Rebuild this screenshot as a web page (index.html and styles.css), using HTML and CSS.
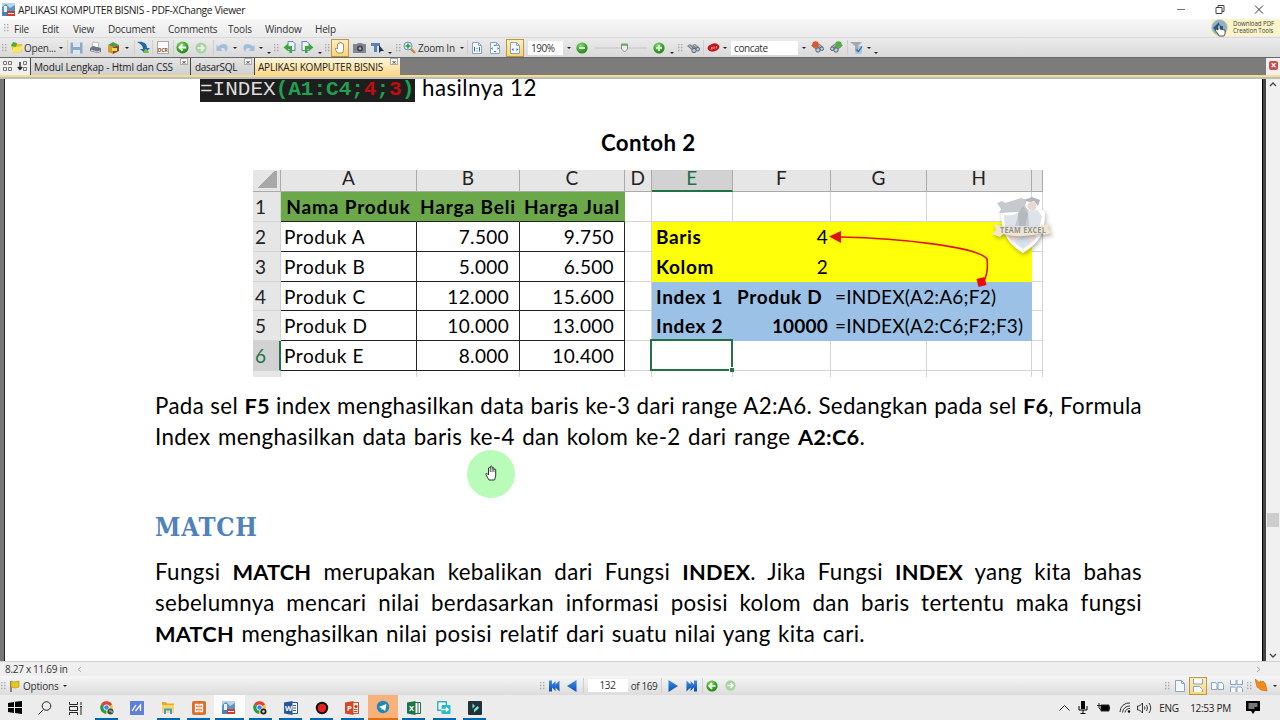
FILE: index.html
```
<!DOCTYPE html>
<html lang="id">

<head>
    <meta charset="UTF-8">
    <meta name="viewport" content="width=device-width, initial-scale=1.0">
    <title>APLIKASI KOMPUTER BISNIS - PDF-XChange Viewer</title>
    <link rel="stylesheet" href="styles.css">
</head>

<body>
    <!-- shared icons -->
    <svg class="defs" width="0" height="0">
        <defs>
            <radialGradient id="ball" cx=".4" cy=".3" r=".8">
                <stop offset="0" stop-color="#8be06a" />
                <stop offset=".55" stop-color="#3aa32a" />
                <stop offset="1" stop-color="#1e7a17" />
            </radialGradient>
            <linearGradient id="blue" x1="0" y1="0" x2="0" y2="1">
                <stop offset="0" stop-color="#3d8fe8" />
                <stop offset="1" stop-color="#0a4db0" />
            </linearGradient>
        </defs>
        <symbol id="grip" viewBox="0 0 5 9">
            <path d="M0 .5h1.4M3 .5h1.4M0 3.5h1.4M3 3.5h1.4M0 6.5h1.4M3 6.5h1.4" stroke="#a9a9a9" stroke-width="1.3" />
        </symbol>
        <symbol id="app" viewBox="0 0 14 14">
            <rect width="13" height="13" fill="#b9d3e8" />
            <path d="M0 4l4-3 4 4 5-3v7H0z" fill="#5f93c4" />
            <path d="M2 3h3v6H2z" fill="#e8f2fa" />
            <rect x="5" y="8" width="8" height="5" fill="#d43a2f" />
            <path d="M0 9h5v4H0z" fill="#4585bd" />
            <path d="M6 10.500h6" stroke="#fff" stroke-width="1" />
        </symbol>
        <symbol id="back" viewBox="0 0 12 12">
            <circle cx="6" cy="6" r="5.6" fill="url(#ball)" />
            <path d="M9.500 6H3.500M6 3.200L3.200 6 6 8.800" fill="none" stroke="#fff" stroke-width="1.7" />
        </symbol>
        <symbol id="fwd" viewBox="0 0 12 12">
            <circle cx="6" cy="6" r="5.6" fill="#a9d3a4" />
            <path d="M2.500 6h6M6 3.200L8.800 6 6 8.800" fill="none" stroke="#eef6ec" stroke-width="1.7" />
        </symbol>
        <symbol id="undo" viewBox="0 0 12 12">
            <path d="M0 3v6h6L4 7c2-2 5-1 5 3 4-4 2-8-2-8-2 0-4 1-5 2.500z" fill="#a3bedb" />
        </symbol>
        <symbol id="page" viewBox="0 0 12 12">
            <path d="M1.500.5h6l3 3v8h-9z" fill="#f6faff" stroke="#8ba3c0" />
            <path d="M7.500.5v3h3" fill="none" stroke="#8ba3c0" />
        </symbol>
        <symbol id="chrome" viewBox="0 0 14 14">
            <circle cx="6.500" cy="6.500" r="6.300" fill="#fbc02d" />
            <path d="M6.500 6.500L1 3.500A6.300 6.300 0 0 1 12 3.500z" fill="#db4437" />
            <path d="M6.500 6.500L1 3.500A6.300 6.300 0 0 0 6 12.800z" fill="#1e9e58" />
            <circle cx="6.500" cy="6.500" r="3" fill="#fff" />
            <circle cx="6.500" cy="6.500" r="2.300" fill="#4285f4" />
        </symbol>
        <symbol id="binoc" viewBox="0 0 13 12">
            <path d="M0 4l3-2 5 4-2 3zM5 3l3-1 4 3-2 3z" fill="#7c848e" />
            <path d="M2 3.500l4 3.500M7 3l3 2.500" stroke="#c3c9d0" />
            <circle cx="7" cy="8.500" r="2.200" fill="#b9d0e2" stroke="#59616b" />
            <circle cx="10.800" cy="7.200" r="1.800" fill="#b9d0e2" stroke="#59616b" />
        </symbol>
    </svg>

    <header class="titlebar">
        <svg width="14" height="14"><use href="#app" /></svg>
        <span class="title">APLIKASI KOMPUTER BISNIS - PDF-XChange Viewer</span>
        <svg class="winbtns" width="90" height="10" viewBox="0 0 90 10">
            <path d="M0 4.500h8" stroke="#777" />
            <path d="M39 2.500h6v6h-6zM41 2.500v-2h6v6h-2" fill="none" stroke="#444" />
            <path d="M78 .5l8 8M86 .5l-8 8" stroke="#333" />
        </svg>
    </header>

    <nav class="menubar">
        <svg class="grip" width="5" height="9"><use href="#grip" /></svg>
        <span>File</span><span>Edit</span><span>View</span><span>Document</span><span>Comments</span><span>Tools</span><span>Window</span><span>Help</span>
        <div class="promo">
            <svg width="18" height="18" viewBox="0 0 18 18">
                <circle cx="8.500" cy="8.500" r="8" fill="#8fb1ca" stroke="#e2d9a8" />
                <path d="M2 9l6-6v4h4v4H8v4z" fill="#285d8c" />
                <path d="M7 15l-3-4 1-1 2 1V6h2v4l5 1v4l-1 2H8z" fill="#fff" stroke="#333" stroke-width=".8" />
            </svg>
            <div>Download PDF<br>Creation Tools</div>
        </div>
    </nav>

    <div class="toolbar">
        <svg class="grip" width="5" height="9"><use href="#grip" /></svg>
        <svg width="13" height="13" viewBox="0 0 13 13">
            <path d="M1 3l4-1 2 1h5v8l-9 1z" fill="#e9c229" />
            <path d="M1 12l3-6 9-1-2 6z" fill="#f9e56a" />
            <path d="M1 5l2-4 4 1-1 4z" fill="#4fae3a" />
        </svg>
        <span class="left">Open...</span>
        <i class="caret"></i>
        <i class="sep"></i>
        <svg width="13" height="12" viewBox="0 0 13 12">
            <path d="M.5.500h12v11H.5z" fill="#8fa9c8" />
            <path d="M3 0h7v5H3zM3 8h7v4H3z" fill="#dce6f1" />
        </svg>
        <svg width="13" height="13" viewBox="0 0 13 13">
            <path d="M4 1l6 1-1 5-6-1z" fill="#fff" stroke="#9aa5b5" stroke-width=".7" />
            <path d="M1 7l3-2 8 2v4l-4 1-7-2z" fill="#6d7683" />
            <path d="M2 9l6 2 3-1" stroke="#d9dee5" fill="none" />
        </svg>
        <svg width="13" height="13" viewBox="0 0 13 13">
            <path d="M1 4l5 2v7l-5-2z" fill="#d79a25" />
            <path d="M6 6l6-2v6l-6 3z" fill="#8a4d23" />
            <path d="M1 4l5-3 6 3-6 2z" fill="#4f9b46" />
            <path d="M5 7h5v3H5z" fill="#f3d35c" />
        </svg>
        <i class="caret"></i>
        <i class="sep"></i>
        <svg width="13" height="13" viewBox="0 0 13 13">
            <path d="M0 1c6-1 10 1 10 6h3l-5 5-5-4h3C6 5 4 3 0 1z" fill="#1e67ad" />
            <path d="M8 8c2 0 4 2 4 4H6z" fill="#79b94c" />
        </svg>
        <i class="sep"></i>
        <span class="ocr">OCR</span>
        <i class="sep"></i>
        <svg width="13" height="13"><use href="#back" /></svg>
        <svg width="12" height="12"><use href="#fwd" /></svg>
        <i class="sep"></i>
        <svg width="13" height="12"><use href="#undo" /></svg>
        <i class="caret"></i>
        <svg class="flip" width="13" height="12"><use href="#undo" /></svg>
        <i class="caret"></i>
        <i class="caret low"></i>
        <svg class="grip" width="5" height="9"><use href="#grip" /></svg>
        <svg width="13" height="13" viewBox="0 0 13 13">
            <path d="M5 .500h5l2 2v7H5z" fill="#eaf4ff" stroke="#5e86ae" />
            <path d="M9 12V5H5V2.500L.5 6.500 5 10V8h1.500v4z" fill="#3aa836" />
        </svg>
        <svg width="13" height="13" viewBox="0 0 13 13">
            <path d="M1 .500h5l2 2v7H1z" fill="#eaf4ff" stroke="#5e86ae" />
            <path d="M4 12V5h4V2.500l4.500 4L8 10V8H6.500v4z" fill="#3aa836" />
        </svg>
        <i class="caret low"></i>
        <svg class="grip" width="5" height="9"><use href="#grip" /></svg>
        <span class="pressed">
            <svg width="12" height="13" viewBox="0 0 12 13">
                <path d="M3.500 12L1 8l1-1 1.500 1V3q.8-1 1.500 0V1.500q.8-1 1.500 0V2q.8-1 1.500 0v1q.8-.8 1.500 0V9l-1 3z" fill="#fff" stroke="#8b7a5a" stroke-width=".8" />
            </svg>
        </span>
        <svg width="13" height="12" viewBox="0 0 13 12">
            <path d="M0 2h4l1-1h4l1 1h3v9H0z" fill="#83878d" />
            <circle cx="7" cy="6.500" r="3" fill="#3b4450" />
            <circle cx="7" cy="6.500" r="1.300" fill="#a9bdd0" />
        </svg>
        <svg width="13" height="12" viewBox="0 0 13 12">
            <path d="M0 1h9v3H6v6H3V4H0z" fill="#5b82b5" />
            <path d="M8 3v8l2-2h3z" fill="#23364f" />
        </svg>
        <i class="caret low"></i>
        <svg class="grip" width="5" height="9"><use href="#grip" /></svg>
        <svg width="13" height="13" viewBox="0 0 13 13">
            <path d="M7 7l5 5" stroke="#c8873c" stroke-width="2.400" />
            <circle cx="5" cy="5" r="4" fill="#d5ecfa" stroke="#6b93b3" />
            <path d="M5 2.500v5M2.500 5h5" stroke="#2b9c2b" stroke-width="1.500" />
        </svg>
        <span class="left zoomtxt">Zoom In</span>
        <i class="caret"></i>
        <i class="sep"></i>
        <svg width="12" height="12" viewBox="0 0 12 12"><use href="#page" />
            <path d="M3.500 5v4.500M8.500 5v4.500M6 6v1M6 8.500v1" stroke="#3273b8" />
        </svg>
        <svg width="12" height="12" viewBox="0 0 12 12"><use href="#page" />
            <path d="M6 2.500L7.500 4h-3zM6 10.500L7.500 9h-3zM2 6.500L3.500 5v3zM10 6.500L8.500 5v3z" fill="#3273b8" />
        </svg>
        <span class="pressed">
            <svg width="12" height="12" viewBox="0 0 12 12"><use href="#page" />
                <path d="M2.500 7.500L4.500 6v3zM9.500 7.500L7.500 6v3z" fill="#3273b8" />
            </svg>
        </span>
        <span class="field pct">190%</span>
        <i class="caret"></i>
        <svg width="12" height="12" viewBox="0 0 12 12">
            <circle cx="6" cy="6" r="5.600" fill="url(#ball)" />
            <path d="M3 6h6" stroke="#fff" stroke-width="1.600" />
        </svg>
        <svg width="52" height="10" viewBox="0 0 52 10">
            <path d="M0 5h52" stroke="#c3c3c3" />
            <path d="M26.500 1h6v5l-3 3-3-3z" fill="#eee" stroke="#8a8a8a" />
            <path d="M27 2h5" stroke="#4caf50" stroke-width="1.500" />
        </svg>
        <svg width="12" height="12" viewBox="0 0 12 12">
            <circle cx="6" cy="6" r="5.600" fill="url(#ball)" />
            <path d="M3 6h6M6 3v6" stroke="#fff" stroke-width="1.600" />
        </svg>
        <i class="caret low"></i>
        <svg class="grip" width="5" height="9"><use href="#grip" /></svg>
        <svg width="13" height="12"><use href="#binoc" /></svg>
        <i class="sep"></i>
        <svg width="13" height="11" viewBox="0 0 13 11">
            <ellipse cx="6.500" cy="5.500" rx="6" ry="4" transform="rotate(-15 6.500 5.500)" fill="#c4161c" />
            <path d="M4 7.500l1-2.500v2.500M7 7V4.500M9 6.500l.7-2.500" stroke="#f3c4c4" stroke-width=".8" fill="none" />
        </svg>
        <i class="caret"></i>
        <span class="field search">concate</span>
        <i class="caret"></i>
        <svg width="13" height="13" viewBox="0 0 13 13"><use href="#binoc" />
            <circle cx="4.500" cy="3.500" r="3.200" fill="#e0562a" />
        </svg>
        <svg class="flip" width="13" height="13" viewBox="0 0 13 13"><use href="#binoc" />
            <circle cx="4.500" cy="3.500" r="3.200" fill="#50b03c" />
        </svg>
        <i class="sep"></i>
        <svg width="14" height="12" viewBox="0 0 14 12">
            <path d="M6 4h6v8H5z" fill="#a9c9e8" />
            <path d="M0 0h12L8 4v7l-3-2V4z" fill="#a3a9b0" />
            <path d="M6.500 7.500l2 2 3.500-5" stroke="#2f65a5" stroke-width="1.300" fill="none" />
        </svg>
        <i class="caret"></i>
        <i class="caret low"></i>
    </div>

    <div class="tabs">
        <div class="tabtools">
            <svg width="25" height="12" viewBox="0 0 25 12">
                <path d="M.5.500h3v3h-3zM5.500.500h3v3h-3zM.5 6.500h3v3h-3zM5.500 6.500h3v3h-3z" fill="none" stroke="#777" />
                <path d="M17 1v7M14.800 6L17 8.500 19.200 6" stroke="#222" stroke-width="1.400" fill="none" />
                <path d="M20.500.500h3v3h-3zM20.500 6.500h3v3h-3z" fill="none" stroke="#777" />
            </svg>
        </div>
        <div class="tab modul"><span>Modul Lengkap - Html dan CSS</span><b>×</b></div>
        <div class="tab sql"><span>dasarSQL</span><b>×</b></div>
        <div class="tab active"><span>APLIKASI KOMPUTER BISNIS</span><b>×</b></div>
        <div class="closeall"><b>×</b></div>
    </div>

    <main class="viewer">
        <div class="gutter"></div>
        <article class="page">
            <p class="result"><code>=INDEX<b><span class="g">(A1:C4;</span><span class="r">4</span><span class="g">;</span><span class="r">3</span><span class="g">)</span></b></code><span class="after">hasilnya 12</span></p>
            <h3>Contoh 2</h3>

            <div class="sheet">
                <div class="head corner"></div>
                <div class="head">A</div>
                <div class="head">B</div>
                <div class="head">C</div>
                <div class="head">D</div>
                <div class="head sel">E</div>
                <div class="head">F</div>
                <div class="head">G</div>
                <div class="head">H</div>
                <div class="head"></div>

                <div class="row">1</div>
                <div class="green">Nama Produk</div>
                <div class="green">Harga Beli</div>
                <div class="green">Harga Jual</div>
                <div></div><div></div><div></div><div></div><div></div><div></div>

                <div class="row">2</div>
                <div class="box name">Produk A</div>
                <div class="box num">7.500</div>
                <div class="box num">9.750</div>
                <div></div>
                <div class="yellow bold">Baris</div>
                <div class="yellow val">4</div>
                <div class="yellow"></div><div class="yellow"></div><div></div>

                <div class="row">3</div>
                <div class="box name">Produk B</div>
                <div class="box num">5.000</div>
                <div class="box num">6.500</div>
                <div></div>
                <div class="yellow bold">Kolom</div>
                <div class="yellow val">2</div>
                <div class="yellow"></div><div class="yellow"></div><div></div>

                <div class="row">4</div>
                <div class="box name">Produk C</div>
                <div class="box num">12.000</div>
                <div class="box num">15.600</div>
                <div></div>
                <div class="blue bold">Index 1</div>
                <div class="blue bold">Produk D</div>
                <div class="blue formula">=INDEX(A2:A6;F2)</div>
                <div></div>

                <div class="row">5</div>
                <div class="box name">Produk D</div>
                <div class="box num">10.000</div>
                <div class="box num">13.000</div>
                <div></div>
                <div class="blue bold">Index 2</div>
                <div class="blue bold val">10000</div>
                <div class="blue formula">=INDEX(A2:C6;F2;F3)</div>
                <div></div>

                <div class="row sel">6</div>
                <div class="box name">Produk E</div>
                <div class="box num">8.000</div>
                <div class="box num">10.400</div>
                <div></div><div class="cursor-cell"><i></i></div><div></div><div></div><div></div><div></div>

                <div class="row last"></div>
                <div class="last"></div><div class="last"></div><div class="last"></div><div class="last"></div><div class="last"></div><div class="last"></div><div class="last"></div><div class="last"></div><div class="last"></div>

                <svg class="arrow" width="170" height="60" viewBox="0 0 170 60">
                    <path d="M12 7C70 8 150 17 158 29c1 8 0 17-4 24" fill="none" stroke="#e2110c" stroke-width="1.600" />
                    <path d="M0 6.500L12 1v12z" fill="#e2110c" />
                    <path d="M147.500 49l8-2 2 8-8 2z" fill="#e80c0c" />
                </svg>
                <svg class="badge" width="64" height="66" viewBox="0 0 64 66">
                    <path d="M10 17c8 2 15 0 22-7 7 7 13 8 20 6l2 3c0 21-6 30-22 40C17 50 10 39 10 17z" fill="#fff" class="shade" />
                    <path d="M13 21c7 1 12 0 18-5 6 5 12 6 18 5 0 17-5 25-17 33-13-8-19-16-19-33z" fill="#dde3e9" />
                    <path d="M6 9l5-2 3 2 16-5 6 2-2 6 5 6 8 6-4 8H24l4-14-20 1 2-4z" fill="#c6c9cd" />
                    <path d="M27 20l5-8 5 8-3 12h-6z" fill="#b4b9c0" />
                    <path d="M37 17l9-1 5 6-2 10H38z" fill="#dde3e9" />
                    <circle cx="41" cy="12" r="4.500" fill="#e9d8cf" />
                    <path d="M33 6l8-3 8 3-2 6-4-5-5 1z" fill="#b3b6ba" />
                    <path d="M17 42h29c-2 5-7 9-14 13-7-4-12-8-15-13z" fill="#f4e0dc" />
                    <path d="M24 47l8-6 8 6-8 7z" fill="#cfe2ee" />
                    <path d="M3 30q28 9 56-1l-2 5 4 5-8 2-2-2q-19 6-39 1l-3 3-8-3 4-4z" fill="#f1e6cd" class="shade" />
                    <text x="9" y="38.500" textLength="46" lengthAdjust="spacingAndGlyphs">TEAM EXCEL</text>
                </svg>
            </div>

            <div class="para first">
                <div class="line">Pada sel <b>F5</b> index menghasilkan data baris ke-3 dari range A2:A6. Sedangkan pada sel <b>F6</b>, Formula</div>
                <div class="line w710">Index menghasilkan data baris ke-4 dan kolom ke-2 dari range <b>A2:C6</b>.</div>
            </div>
            <h2>MATCH</h2>
            <div class="para">
                <div class="line">Fungsi <b>MATCH</b> merupakan kebalikan dari Fungsi <b>INDEX</b>. Jika Fungsi <b>INDEX</b> yang kita bahas</div>
                <div class="line">sebelumnya mencari nilai berdasarkan informasi posisi kolom dan baris tertentu maka fungsi</div>
                <div class="line w710"><b>MATCH</b> menghasilkan nilai posisi relatif dari suatu nilai yang kita cari.</div>
            </div>

            <div class="pointer">
                <svg width="12" height="16" viewBox="0 0 12 16">
                    <path d="M4 15L.8 9.500q0-1.500 1.500-.8L3.500 10V3q.9-1 1.800 0V1.500q.9-1 1.800 0V3q.9-1 1.800 0v1.500q.9-1 1.800 0V11L9.500 15z" fill="#fff" stroke="#333" />
                    <path d="M5.300 3v4M7.100 3v4M8.900 4v3" stroke="#333" stroke-width=".8" />
                </svg>
            </div>
        </article>
        <div class="edge"></div>
        <div class="scroll">
            <svg width="8" height="5" viewBox="0 0 8 5"><path d="M1 4l3-3 3 3" fill="none" stroke="#444" stroke-width="1.300" /></svg>
            <i class="thumb"></i>
            <svg width="8" height="5" viewBox="0 0 8 5"><path d="M1 1l3 3 3-3" fill="none" stroke="#444" stroke-width="1.300" /></svg>
        </div>
    </main>

    <div class="sizebar">
        <span class="size">8.27 x 11.69 in</span>
        <svg width="5" height="7" viewBox="0 0 5 7"><path d="M4 1L1 3.500 4 6" fill="none" stroke="#aaa" /></svg>
        <svg class="right" width="5" height="7" viewBox="0 0 5 7"><path d="M1 1l3 2.500L1 6" fill="none" stroke="#aaa" /></svg>
    </div>

    <div class="navbar">
        <svg class="grip" width="5" height="9"><use href="#grip" /></svg>
        <svg width="10" height="12" viewBox="0 0 10 12">
            <path d="M1 1v11" stroke="#666" stroke-width="1.500" />
            <path d="M1 1l3 1 5-1v6L5 8 1 7z" fill="#e8c81e" stroke="#a58b10" stroke-width=".6" />
        </svg>
        <span class="left">Options</span>
        <i class="caret"></i>
        <span></span>
        <svg class="grip" width="5" height="9"><use href="#grip" /></svg>
        <svg width="11" height="12" viewBox="0 0 11 12"><path d="M0 .5h3v4L6.500 1v3.500L10.500.5v11L6.500 7.500V11L3 7.500v4H0z" fill="url(#blue)" /></svg>
        <svg width="10" height="12" viewBox="0 0 10 12"><path d="M9.500 0v12L0 6z" fill="url(#blue)" /></svg>
        <i class="sep"></i>
        <span class="field pageno">132</span>
        <span>of 169</span>
        <i class="sep"></i>
        <svg class="flip" width="10" height="12" viewBox="0 0 10 12"><path d="M9.500 0v12L0 6z" fill="url(#blue)" /></svg>
        <svg class="flip" width="11" height="12" viewBox="0 0 11 12"><path d="M0 .5h3v4L6.500 1v3.500L10.500.5v11L6.500 7.500V11L3 7.500v4H0z" fill="url(#blue)" /></svg>
        <i class="sep"></i>
        <svg width="12" height="12"><use href="#back" /></svg>
        <svg width="11" height="11"><use href="#fwd" /></svg>
        <span></span>
        <svg class="grip" width="5" height="9"><use href="#grip" /></svg>
        <svg width="12" height="12"><use href="#page" /></svg>
        <span class="pressed">
            <svg width="12" height="13" viewBox="0 0 12 13">
                <path d="M1.500 0v5h9V0M1.500 13V7.500h6l3 3V13" fill="#f6faff" stroke="#8ba3c0" />
            </svg>
        </span>
        <svg width="13" height="10" viewBox="0 0 13 10"><path d="M.5 1.500h4l1.500 2v5H.5zM7 1.500h4l1.500 2v5H7z" fill="#f6faff" stroke="#8ba3c0" /></svg>
        <svg width="13" height="12" viewBox="0 0 13 12"><path d="M.5 0v4.500H6V0M7 0v4.500h5.500V0M.5 12V7h4L6 8.500V12M7 12V7h4l1.500 1.500V12" fill="#f6faff" stroke="#8ba3c0" /></svg>
        <svg class="grip" width="5" height="9"><use href="#grip" /></svg>
        <svg width="13" height="13" viewBox="0 0 13 13"><path d="M0 0l5 4V2l2 1 1-1 2 2 1 3 1 5-6-1-4-3z" fill="#f28a1c" stroke="#c8670e" stroke-width=".6" /></svg>
        <i class="caret"></i>
    </div>

    <footer class="taskbar">
        <div class="app first"><svg width="14" height="13" viewBox="0 0 14 13"><path d="M0 2l6-1v5H0zM7 .8L14 0v6H7zM0 7h6v5l-6-1zM7 7h7v6l-7-1z" fill="#000" /></svg></div>
        <div class="app"><svg width="14" height="14" viewBox="0 0 14 14"><circle cx="8.500" cy="5" r="4.300" fill="none" stroke="#222" /><path d="M5.500 8.500L.5 13.500" stroke="#222" /></svg></div>
        <div class="app"><svg width="14" height="14" viewBox="0 0 14 14"><path d="M.5 1v2.500h8V1M.5 5.500h8v4h-8zM.5 14v-2.500h8V14M12 1v3M12 7v7" fill="none" stroke="#222" /><path d="M11 5h2v1.500h-2z" fill="#222" /></svg></div>
        <div class="app open"><svg width="14" height="14" viewBox="0 0 14 14"><use href="#chrome" /><circle cx="10.500" cy="10.500" r="3" fill="#24506d" /><path d="M9 10h3v2" stroke="#e6c75a" fill="none" /></svg></div>
        <div class="app"><svg width="14" height="14" viewBox="0 0 14 14"><rect width="14" height="14" fill="#5f7fdb" /><path d="M2 10l4-6M5.500 10l5-6v6" stroke="#fff" stroke-width="1.300" fill="none" /></svg></div>
        <div class="app open"><svg width="14" height="12" viewBox="0 0 14 12"><path d="M1 0h4l1 1.500h7V5H1z" fill="#e9a825" /><path d="M1 3h12v8H1z" fill="#fbd666" /><path d="M3 12V6.500h8V12H9V8.500H5V12z" fill="#3e9edd" /></svg></div>
        <div class="app open"><svg width="14" height="14" viewBox="0 0 14 14"><rect width="14" height="14" rx="2" fill="#df6d27" /><path d="M6 5.500V3.500H3.500V6l1 1-1 1v2.500H6v-2M8 5.500V3.500h2.500V6l-1 1 1 1v2.500H8v-2M5 7h4" fill="none" stroke="#fff" stroke-width="1.300" /></svg></div>
        <div class="app open current"><svg width="14" height="14"><use href="#app" /></svg></div>
        <div class="app open"><svg width="14" height="14" viewBox="0 0 14 14"><use href="#chrome" /><circle cx="10.500" cy="10.500" r="3" fill="#222" /><circle cx="10.500" cy="10.500" r="1.200" fill="#ddd" /></svg></div>
        <div class="app open"><svg width="14" height="14" viewBox="0 0 14 14"><path d="M7 1.500h6.500v11H7z" fill="#fff" stroke="#2b579a" /><path d="M9 4.500h3M9 7h3M9 9.500h3" stroke="#2b579a" /><path d="M0 1.500L8.500 0v14L0 12.500z" fill="#2b579a" /><text x="1" y="9.800">W</text></svg></div>
        <div class="app open"><svg width="14" height="14" viewBox="0 0 14 14"><circle cx="7" cy="7" r="6.200" fill="#111" /><circle cx="7" cy="7" r="4.200" fill="#e52421" /></svg></div>
        <div class="app open"><svg width="14" height="14" viewBox="0 0 14 14"><path d="M7 1.500h6.500v11H7z" fill="#fff" stroke="#d24726" /><path d="M9 8.500h3.500M9 10.500h3.500" stroke="#d24726" /><circle cx="11" cy="5.500" r="1.700" fill="#d24726" /><path d="M0 1.500L8.500 0v14L0 12.500z" fill="#d24726" /><text x="2" y="9.800">P</text></svg></div>
        <div class="app open alert"><svg width="14" height="14" viewBox="0 0 14 14"><circle cx="7" cy="7" r="6.200" fill="#2186b8" /><path d="M2.800 7l7.700-3-1.300 7-2.500-2-1 1.300L5.500 8z" fill="#fff" /></svg></div>
        <div class="app open"><svg width="14" height="14" viewBox="0 0 14 14"><path d="M7 1.500h6.500v11H7z" fill="#fff" stroke="#217346" /><path d="M11 2v10" stroke="#217346" /><path d="M0 1.500L8.500 0v14L0 12.500z" fill="#217346" /><text x="2" y="9.800">X</text></svg></div>
        <div class="app open"><svg width="14" height="14" viewBox="0 0 14 14"><path d="M.8.800h8.500v8.500H.8z" fill="#fff" stroke="#2cb3bd" stroke-width="1.400" /><rect x="4.500" y="4" width="9" height="9" rx="1" fill="#24bccd" /><path d="M4 8.500h7M9 6.500l2.300 2L9 10.500" stroke="#fff" stroke-width="1.300" fill="none" /></svg></div>
        <div class="app open"><svg width="14" height="14" viewBox="0 0 14 14"><rect width="14" height="14" rx="1" fill="#22323c" /><path d="M4.500 2.500L7 5 4.500 7.500zM9.500 5l1.500 2-5 4.500V8.500z" fill="#7be8d0" /></svg></div>

        <div class="tray">
            <svg width="11" height="8" viewBox="0 0 11 8"><path d="M.5 6.500l5-5 5 5" fill="none" stroke="#222" /></svg>
            <svg width="10" height="13" viewBox="0 0 10 13"><path d="M3 0h4v8H3z" fill="#000" /><path d="M1 5v4h8V5M5 9v3.500M2.500 12.500h5" fill="none" stroke="#000" /></svg>
            <svg width="14" height="9" viewBox="0 0 14 9"><path d="M4 2h8v6H4z" fill="#000" stroke="#222" /><path d="M12.500 3.500v3M0 2.500h4M2 0v5l2 2" stroke="#222" fill="none" /></svg>
            <svg width="12" height="11" viewBox="0 0 12 11"><path d="M1 10A9 9 0 0 1 11 1M3.500 10.500A7 7 0 0 1 11 4M6 10.500A4.500 4.500 0 0 1 11 6.500" fill="none" stroke="#333" /><circle cx="10" cy="9.500" r="1.200" /></svg>
            <svg width="15" height="12" viewBox="0 0 15 12"><path d="M.5 4h2l3-3v10l-3-3h-2zM7.500 4.500q1 1.500 0 3M9.500 3q2 3 0 6M12 1q3.500 5 0 10" fill="none" stroke="#333" /></svg>
            <span>ENG</span>
            <span class="clock">12:53 PM</span>
            <svg width="14" height="13" viewBox="0 0 14 13"><path d="M0 0h14v10H9l-2 3-2-3H0z" /><path d="M2.500 3h9M2.500 5h9M2.500 7h6" stroke="#eee" /></svg>
        </div>
    </footer>
</body>

</html>
```
FILE: styles.css
```
* {
    box-sizing: border-box;
}

body {
    margin: 0;
    width: 1280px;
    height: 720px;
    overflow: hidden;
    display: flex;
    flex-direction: column;
    background: #fff;
    color: #333;
    font-family: "Open Sans", "Noto Sans", sans-serif;
    font-size: 10px;
    letter-spacing: -0.1px;
}

svg {
    display: block;
    flex: none;
}

.defs {
    position: absolute;
}

.flip {
    transform: scaleX(-1);
}

/* title and menu */

.titlebar {
    height: 19px;
    flex: none;
    display: flex;
    align-items: center;
    padding-left: 2px;
}

.title {
    margin-left: 2px;
    font-size: 10.3px;
    letter-spacing: -0.34px;
    color: #222;
}

.winbtns {
    margin-left: auto;
    margin-right: 13px;
}

.menubar {
    height: 19px;
    flex: none;
    display: grid;
    grid-template-columns: 12px 28px 31px 35px 60px 60px 37px 50px 895px auto;
    align-items: center;
    background: linear-gradient(#f7f7f7, #ebebeb);
    border-bottom: 1px solid #d9d9d9;
}

.menubar span {
    padding: 1px 0 0 2px;
    white-space: nowrap;
    letter-spacing: -0.2px;
}

.grip {
    margin: 1px auto 0;
}

.promo {
    display: flex;
    align-items: center;
    gap: 4px;
    width: 69px;
    height: 17px;
    position: absolute;
    left: 1211px;
    top: 19px;
    background: #faf4c8;
    font-size: 6.2px;
    line-height: 6.5px;
    letter-spacing: -0.1px;
    white-space: nowrap;
    color: #444;
}

/* toolbar */

.toolbar {
    height: 19px;
    flex: none;
    display: grid;
    grid-template-columns:
        8px 16px 32px 10px 3px 15px 22px 15px 11px 4px 14px 4px 17px 4px 15px 22px 3px 15px 10px 16px 10px 5px
        10px 16px 20px 6px
        8px 18px 20px 16px 9px
        8px 15px 40px 9px 3px 16px 20px 20px 41px 6px 20px 58px 18px 8px
        8px 18px 3px 16px 7px 73px 6px 20px 18px 4px 16px 8px 6px;
    align-items: center;
    justify-items: center;
    background: linear-gradient(#ebebeb, #d9d9d9);
    line-height: 12px;
}

.left {
    justify-self: start;
}

.toolbar .left {
    letter-spacing: -0.25px;
}

.zoomtxt {
    padding-left: 1px;
}

.caret {
    width: 0;
    height: 0;
    border: 2px solid transparent;
    border-top: 2.5px solid #222;
    border-bottom: 0;
}

.caret.low {
    margin-top: 11px;
}

.sep {
    width: 1px;
    height: 15px;
    background: #cfcfcf;
}

.ocr {
    width: 12px;
    height: 13px;
    padding-top: 5px;
    border: 1px solid #aaa;
    background: #fbfbfb;
    font-size: 5px;
    line-height: 6px;
    font-weight: bold;
    text-align: center;
    color: #8a4a10;
}

.pressed {
    width: 18px;
    height: 18px;
    display: flex;
    align-items: center;
    justify-content: center;
    border: 1px solid #b9984c;
    background: linear-gradient(#fdeebb, #fbd676);
}

.field {
    height: 14px;
    background: #fff;
    line-height: 14px;
    padding-left: 3px;
}

.pct {
    width: 35px;
    letter-spacing: -0.5px;
}

.search {
    width: 67px;
    letter-spacing: -0.4px;
}

/* document tabs */

.tabs {
    height: 22px;
    flex: none;
    display: flex;
    background: #7c7c7c;
    border-top: 1px solid #666;
    border-bottom: 2px solid #bdbdbd;
    box-shadow: inset 0 -2px #f6dc8c;
    padding-bottom: 2px;
}

.tabtools {
    width: 30px;
    padding: 3px 0 0 3px;
    background: #f0f0f0;
}

.tab {
    display: flex;
    background: linear-gradient(#e4e4e4, #cfcfcf);
    border-left: 1px solid #444;
    padding-left: 4px;
    line-height: 19px;
    letter-spacing: -0.15px;
    color: #222;
    white-space: nowrap;
}

.modul {
    width: 160px;
    padding-left: 3px;
}

.sql {
    width: 64px;
    letter-spacing: -0.3px;
}

.tab.active {
    width: 146px;
    padding-left: 3px;
    letter-spacing: -0.22px;
    background: linear-gradient(#fef6da, #fbd98a);
}

.tab span {
    flex: 1;
}

.tab b {
    width: 8px;
    height: 7px;
    margin-right: 2px;
    background: #f8f8f4;
    border: 1px solid #aaa;
    font-size: 8px;
    font-weight: normal;
    line-height: 5px;
    text-align: center;
}

.closeall {
    width: 14px;
    margin-left: auto;
    background: #f0f0f0;
}

.closeall b {
    display: block;
    width: 9px;
    height: 9px;
    margin: 3px 0 0 3px;
    border-radius: 2px;
    background: #c9504d;
    color: #fff;
    font-size: 10px;
    line-height: 8px;
    text-align: center;
}

/* pdf page */

.viewer {
    height: 582px;
    flex: none;
    display: flex;
    overflow: hidden;
}

.gutter {
    width: 5px;
    background: #777;
    border-right: 1px solid #222;
}

.page {
    width: 1257px;
    height: 582px;
    overflow: hidden;
    position: relative;
    color: #000;
    font-family: Lato, sans-serif;
    font-size: 22.3px;
    line-height: 30px;
    letter-spacing: 0.35px;
    font-variant-ligatures: none;
}

.page p,
.page h2,
.page h3 {
    margin: 0;
}

.edge {
    width: 4px;
    background: #444;
    border-left: 1px solid #000;
}

.page .result {
    display: flex;
    height: 31px;
    margin: -6px 0 0 195px;
}

code {
    width: 215px;
    height: 23px;
    margin-top: 6px;
    background: #1e1e1e;
    color: #ddd;
    font-family: "Liberation Mono", monospace;
    font-size: 21px;
    line-height: 22px;
    letter-spacing: 0;
}

.g {
    color: #1fa050;
}

.r {
    color: #c00d0d;
}

.after {
    padding-left: 7px;
    line-height: 29px;
    letter-spacing: 0.45px;
}

.page h3 {
    margin: 24px 0 11px 596px;
    font-size: 22.3px;
    height: 31px;
}

.para {
    margin-left: 150px;
    width: 987px;
}

.para.first {
    margin-top: 14px;
}

.line {
    height: 31px;
    white-space: nowrap;
    text-align: justify;
    text-align-last: justify;
}

.line b {
    font-size: 21.8px;
    letter-spacing: 0.2px;
}

.w710 {
    width: 710px;
}

.page h2 {
    height: 31px;
    margin: 57px 0 16px 150px;
    color: #4f81bd;
    font-family: "DejaVu Serif Condensed", "DejaVu Serif", serif;
    font-stretch: condensed;
    font-size: 25.5px;
    line-height: 34px;
    letter-spacing: 0.8px;
}

/* spreadsheet */

.sheet {
    position: relative;
    display: grid;
    grid-template-columns: 28px 136px 103px 105px 27px 81px 98px 96px 105px 11px;
    grid-template-rows: 22px 30px 30px 30px 29px 30px 30px 6px;
    width: 790px;
    margin-left: 248px;
    font-size: 19px;
    letter-spacing: 0.35px;
}

.sheet > div {
    border-right: 1px solid #d4d4d4;
    border-bottom: 1px solid #d4d4d4;
    padding: 0 4px;
    line-height: 29px;
    white-space: nowrap;
}

.sheet > .head {
    background: #e6e6e6;
    border-color: #aaa;
    text-align: center;
    line-height: 16px;
    color: #222;
}

.sheet > .head.sel {
    background: #d2d2d2;
    border-bottom: 2px solid #217346;
    color: #217346;
}

.sheet > .corner {
    background: linear-gradient(135deg, transparent 50%, #a8a8a8 50%) 2px 1px / 22px 17px no-repeat #e6e6e6;
}

.sheet > .row {
    background: #e6e6e6;
    padding: 0 0 0 2px;
    color: #222;
}

.sheet > .row.sel {
    background: #d2d2d2;
    border-right: 2px solid #217346;
    color: #217346;
}

.sheet > .green {
    background: #6aa84a;
    border-right-color: #6aa84a;
    border-bottom-color: #222;
    padding: 0;
    text-align: center;
    font-weight: bold;
    letter-spacing: 0.85px;
}

.sheet > .box {
    border-color: #222;
}

.sheet > .name {
    padding-left: 3px;
    letter-spacing: 0.6px;
}

.sheet > .num {
    text-align: right;
    padding-right: 10px;
}

.sheet > .yellow {
    background: #ffff0a;
    border-color: #ffff0a;
}

.sheet > .blue {
    background: #9bc2e6;
    border-color: #9bc2e6;
}

.sheet > .bold {
    font-weight: bold;
    letter-spacing: 0.65px;
}

.sheet > .val {
    text-align: right;
    padding-right: 2px;
    letter-spacing: 0.2px;
}

.sheet > .formula {
    grid-column: span 2;
    letter-spacing: 0.2px;
}

.sheet > .cursor-cell {
    position: relative;
    border: 2px solid #217346;
    margin: -2px 0 0 -2px;
}

.cursor-cell i {
    position: absolute;
    right: -3px;
    bottom: -3px;
    width: 5px;
    height: 5px;
    background: #217346;
    border: 1px solid #fff;
    border-width: 1px 0 0 1px;
}

.sheet > .last {
    border-bottom: 0;
}

.arrow {
    position: absolute;
    left: 576px;
    top: 60px;
}

.badge {
    position: absolute;
    left: 738px;
    top: 24px;
}

.badge text {
    font-family: "Open Sans", sans-serif;
    font-size: 8px;
    font-weight: bold;
    fill: #8d9297;
}

.shade {
    filter: drop-shadow(1px 2px 2px rgba(0, 0, 0, .3));
}

.pointer {
    position: absolute;
    left: 462px;
    top: 371px;
    width: 48px;
    height: 48px;
    border-radius: 50%;
    background: #b9fbb9;
    display: flex;
    align-items: center;
    justify-content: center;
    padding-bottom: 2px;
}

.scroll {
    width: 14px;
    height: 582px;
    display: flex;
    flex-direction: column;
    align-items: center;
    background: #f0f0f0;
    padding: 3px 0 3px;
}

.thumb {
    width: 12px;
    height: 14px;
    margin: 426px 0 auto;
    background: #cdcdcd;
}

/* bottom bars */

.sizebar {
    height: 15px;
    flex: none;
    display: flex;
    align-items: center;
    background: #efefef;
    border-top: 1px solid #d0d0d0;
    color: #333;
}

.size {
    width: 77px;
    padding-left: 5px;
    white-space: nowrap;
    letter-spacing: -0.3px;
}

.sizebar .right {
    margin-left: auto;
    margin-right: 19px;
}

.navbar {
    height: 19px;
    flex: none;
    display: grid;
    grid-template-columns:
        7px 16px 36px 12px 467px
        8px 17px 18px 4px 45px 28px 6px 18px 18px 4px 16px 20px 423px
        8px 18px 18px 20px 18px 8px 16px 11px;
    align-items: center;
    justify-items: center;
    background: linear-gradient(#f6f6f6, #dcdcdc);
    line-height: 12px;
    letter-spacing: -0.4px;
    white-space: nowrap;
}

.navbar .left {
    letter-spacing: -0.2px;
}

.pageno {
    width: 40px;
    height: 13px;
    line-height: 13px;
    padding: 0;
    text-align: center;
}

.taskbar {
    height: 25px;
    flex: none;
    display: flex;
    background: #ececec;
}

.app {
    width: 30.7px;
    height: 25px;
    display: flex;
    align-items: center;
    justify-content: center;
}

.app.first {
    width: 30px;
}

.app.open {
    background: linear-gradient(#0067b0, #0067b0) center bottom / 23px 2px no-repeat;
}

.app.open.current {
    background-color: #fbfbfb;
    background-size: 29px 2px;
}

.app.open.alert {
    background: #f7b27c;
    border-bottom: 2px solid #e0700c;
}

.app text {
    font-family: "Open Sans", sans-serif;
    font-size: 7.5px;
    font-weight: bold;
    fill: #fff;
}

.tray {
    width: 222px;
    margin-left: auto;
    display: grid;
    grid-template-columns: 13px 24px 18px 24px 15px 34px 49px 35px;
    align-items: center;
    justify-items: center;
    color: #222;
    white-space: nowrap;
    letter-spacing: -0.3px;
}
```
